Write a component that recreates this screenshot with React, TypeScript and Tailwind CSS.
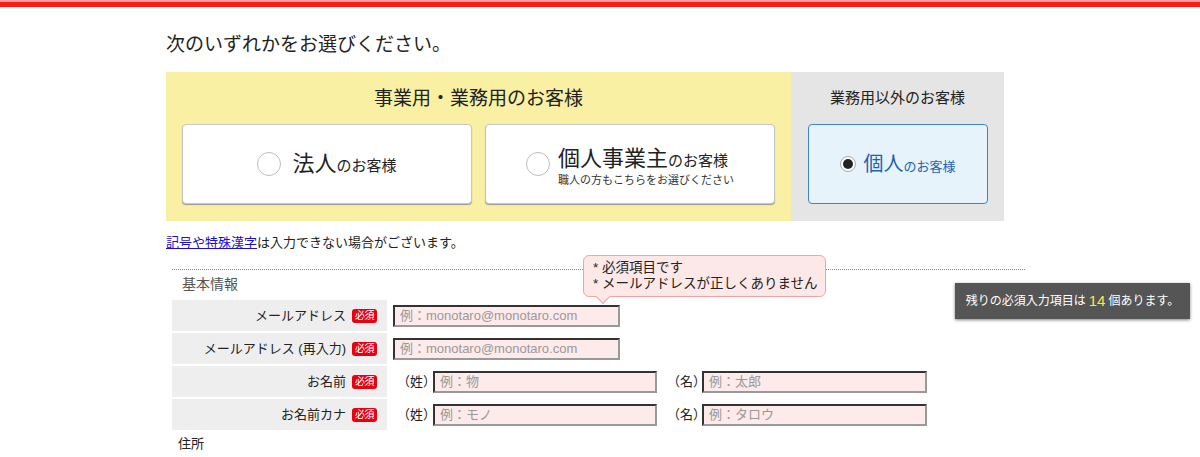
import React from "react";

const FONT = { fontFamily: '"Liberation Sans", "Noto Sans CJK JP", sans-serif' };

function Radio({ checked = false }: { checked?: boolean }) {
  if (checked) {
    return (
      <span className="w-[16px] h-[16px] rounded-full bg-white border border-[#aaa] flex items-center justify-center shrink-0">
        <span className="w-[10px] h-[10px] rounded-full bg-[#222]" />
      </span>
    );
  }
  return <span className="w-[24px] h-[24px] rounded-full bg-white border-[1.5px] border-[#bdbdbd] shrink-0" />;
}

function Required() {
  return (
    <span className="bg-[#e60012] text-white text-[10px] leading-none rounded-[3px] px-[3px] py-[2px] tracking-tighter">
      必須
    </span>
  );
}

function Input({ placeholder, width }: { placeholder: string; width: string }) {
  return (
    <input
      readOnly
      placeholder={placeholder}
      className={`${width} h-[22px] bg-[#fdeaea] border-2 border-solid border-t-[#333] border-l-[#333] border-b-[#999] border-r-[#999] px-[5px] text-[13px] text-[#333] placeholder:text-[#999] outline-none`}
      style={FONT}
    />
  );
}

function Row({ label, children }: { label: string; children: React.ReactNode }) {
  return (
    <div className="flex h-[31px] mt-[2px]">
      <div className="w-[215px] bg-[#eeeeee] flex items-center justify-end gap-[6px] pr-[10px] text-[13px] text-[#222]">
        <span>{label}</span>
        <Required />
      </div>
      <div className="flex items-center pl-[6px]">{children}</div>
    </div>
  );
}

export default function App() {
  return (
    <div className="relative w-[1200px] h-[457px] bg-white overflow-hidden text-[#222]" style={FONT}>
      <div className="h-[7px] border-t-2 border-[#ff9c9c] bg-[#ff1a1a]" />

      <div className="ml-[166px] w-[838px]">
        <h1 className="mt-[24px] text-[19px] leading-[27px] text-[#222]">次のいずれかをお選びください。</h1>

        {/* customer type */}
        <div className="flex mt-[14px] h-[149px]">
          <div className="w-[625px] bg-[#f9f0a4] px-[16px]">
            <div className="h-[52px] flex items-center justify-center text-[19px] pt-[2px]">事業用・業務用のお客様</div>
            <div className="flex gap-[13px]">
              <div className="w-[290px] h-[80px] bg-white border border-[#c6c6c6] rounded-[4px] shadow-[0_1px_1px_#9a9a9a] flex items-center justify-center gap-[11px]">
                <Radio />
                <span className="text-[22px] leading-none">
                  法人<span className="text-[15px]">のお客様</span>
                </span>
              </div>
              <div className="w-[290px] h-[80px] bg-white border border-[#c6c6c6] rounded-[4px] shadow-[0_1px_1px_#9a9a9a] flex items-center justify-center gap-[8px]">
                <Radio />
                <div className="flex flex-col pt-[6px]">
                  <span className="text-[22px] leading-none">
                    個人事業主<span className="text-[15px]">のお客様</span>
                  </span>
                  <span className="text-[11px] leading-none mt-[5px] text-[#333]">職人の方もこちらをお選びください</span>
                </div>
              </div>
            </div>
          </div>
          <div className="w-[213px] bg-[#e5e5e5] px-[17px]">
            <div className="h-[52px] flex items-center justify-center text-[15px] pt-[1px]">業務用以外のお客様</div>
            <div className="w-[180px] h-[80px] bg-[#e6f3fb] border border-[#3d86c6] rounded-[4px] flex items-center justify-center gap-[7px] text-[#1b63ad]">
              <Radio checked />
              <span className="text-[20px] leading-none">
                個人<span className="text-[13px]">のお客様</span>
              </span>
            </div>
          </div>
        </div>

        <p className="mt-[12px] text-[13px] leading-[20px]">
          <a href="#" className="text-[#1a0dd6] underline">記号や特殊漢字</a>は入力できない場合がございます。
        </p>

        {/* form */}
        <div className="relative ml-[6px] w-[853px] mt-[16px] border-t border-dotted border-[#888]">
          <div className="h-[28px] flex items-center pl-[10px] text-[14px] text-[#555] bg-white">基本情報</div>
          <Row label="メールアドレス">
            <Input placeholder="例：monotaro@monotaro.com" width="w-[227px]" />
          </Row>
          <Row label="メールアドレス (再入力)">
            <Input placeholder="例：monotaro@monotaro.com" width="w-[227px]" />
          </Row>
          <Row label="お名前">
            <span className="text-[13px] w-[40px] pl-[4px]">（姓）</span>
            <Input placeholder="例：物" width="w-[224px]" />
            <span className="text-[13px] w-[45px] pl-[10px]">（名）</span>
            <Input placeholder="例：太郎" width="w-[225px]" />
          </Row>
          <Row label="お名前カナ">
            <span className="text-[13px] w-[40px] pl-[4px]">（姓）</span>
            <Input placeholder="例：モノ" width="w-[224px]" />
            <span className="text-[13px] w-[45px] pl-[10px]">（名）</span>
            <Input placeholder="例：タロウ" width="w-[225px]" />
          </Row>
          <div className="pl-[6px] mt-[6px] text-[13px] leading-[16px]">住所</div>

          {/* error tooltip */}
          <div className="absolute left-[411px] top-[-15px] w-[243px] h-[42px] bg-[#fde8e8] border border-[#f3a3a3] rounded-[6px] px-[9px] pt-[4px] text-[13.5px] leading-[16px] text-[#222] whitespace-nowrap">
            <div>* 必須項目です</div>
            <div>* メールアドレスが正しくありません</div>
            <span className="absolute left-[14px] bottom-[-6px] w-[10px] h-[10px] bg-[#fde8e8] border-r border-b border-[#f3a3a3] rotate-45" />
          </div>
        </div>
      </div>

      {/* remaining count */}
      <div className="absolute left-[955px] top-[283px] w-[235px] h-[36px] bg-[#555] shadow-[0_1px_3px_rgba(0,0,0,0.5)] flex items-center justify-center text-white text-[12px]">
        残りの必須入力項目は<span className="text-[#f6ea4a] text-[15px] mx-[3px]">14</span>個あります。
      </div>
    </div>
  );
}
